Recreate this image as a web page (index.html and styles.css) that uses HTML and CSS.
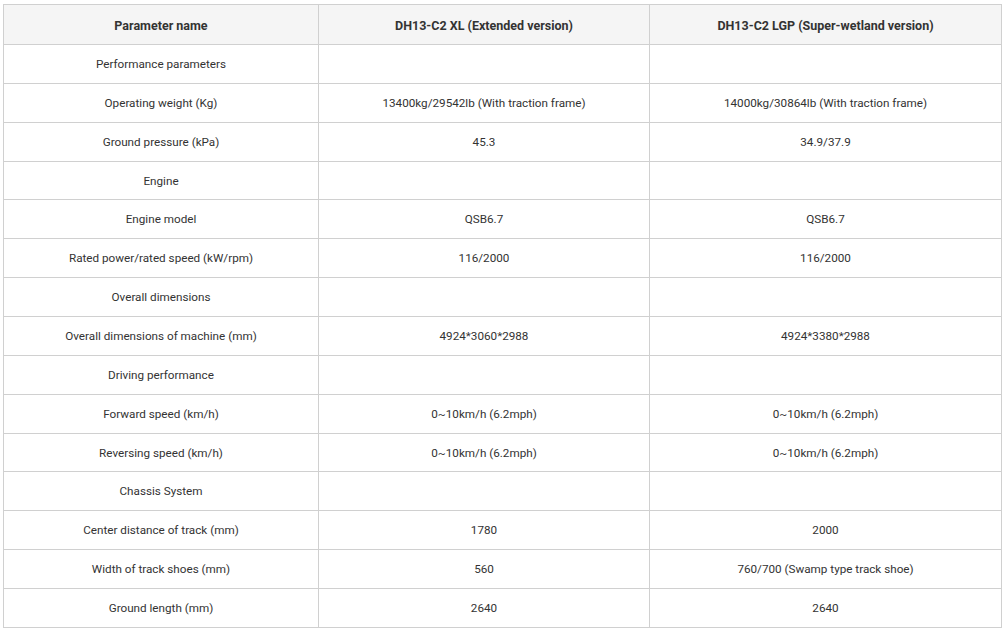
FILE: index.html
```html
<!DOCTYPE html>
<html>
<head>
<meta charset="utf-8">
<link rel="stylesheet" href="styles.css">
</head>
<body>
<table class="spec">
  <colgroup><col class="c1"><col class="c2"><col class="c3"></colgroup>
  <thead>
    <tr><th>Parameter name</th><th>DH13-C2 XL (Extended version)</th><th>DH13-C2 LGP (Super-wetland version)</th></tr>
  </thead>
  <tbody>
    <tr><td>Performance parameters</td><td></td><td></td></tr>
    <tr><td>Operating weight (Kg)</td><td>13400kg/29542lb (With traction frame)</td><td>14000kg/30864lb (With traction frame)</td></tr>
    <tr><td>Ground pressure (kPa)</td><td>45.3</td><td>34.9/37.9</td></tr>
    <tr><td>Engine</td><td></td><td></td></tr>
    <tr><td>Engine model</td><td>QSB6.7</td><td>QSB6.7</td></tr>
    <tr><td>Rated power/rated speed (kW/rpm)</td><td>116/2000</td><td>116/2000</td></tr>
    <tr><td>Overall dimensions</td><td></td><td></td></tr>
    <tr><td>Overall dimensions of machine (mm)</td><td>4924*3060*2988</td><td>4924*3380*2988</td></tr>
    <tr><td>Driving performance</td><td></td><td></td></tr>
    <tr><td>Forward speed (km/h)</td><td>0~10km/h (6.2mph)</td><td>0~10km/h (6.2mph)</td></tr>
    <tr><td>Reversing speed (km/h)</td><td>0~10km/h (6.2mph)</td><td>0~10km/h (6.2mph)</td></tr>
    <tr><td>Chassis System</td><td></td><td></td></tr>
    <tr><td>Center distance of track (mm)</td><td>1780</td><td>2000</td></tr>
    <tr><td>Width of track shoes (mm)</td><td>560</td><td>760/700 (Swamp type track shoe)</td></tr>
    <tr><td>Ground length (mm)</td><td>2640</td><td>2640</td></tr>
  </tbody>
</table>
</body>
</html>
```
FILE: styles.css
```css
html, body {
  margin: 0;
  padding: 0;
  background: #fff;
}
body {
  padding: 4px 0 0 3px;
  font-family: Roboto, "Liberation Sans", sans-serif;
  font-size: 11.7px;
  color: #333;
}
.spec {
  border-collapse: collapse;
  table-layout: fixed;
  width: 998px;
}
.c1 { width: 315px; }
.c2 { width: 331px; }
.c3 { width: 352px; }
.spec th, .spec td {
  border: 1px solid #d0d0d0;
  text-align: center;
  vertical-align: middle;
  padding: 0 8px;
}
.spec th {
  height: 38px;
  padding-top: 1px;
  background: #f5f5f5;
  font-weight: bold;
  font-size: 12.5px;
  color: #333;
}
.spec td {
  height: 37.87px;
}
```
